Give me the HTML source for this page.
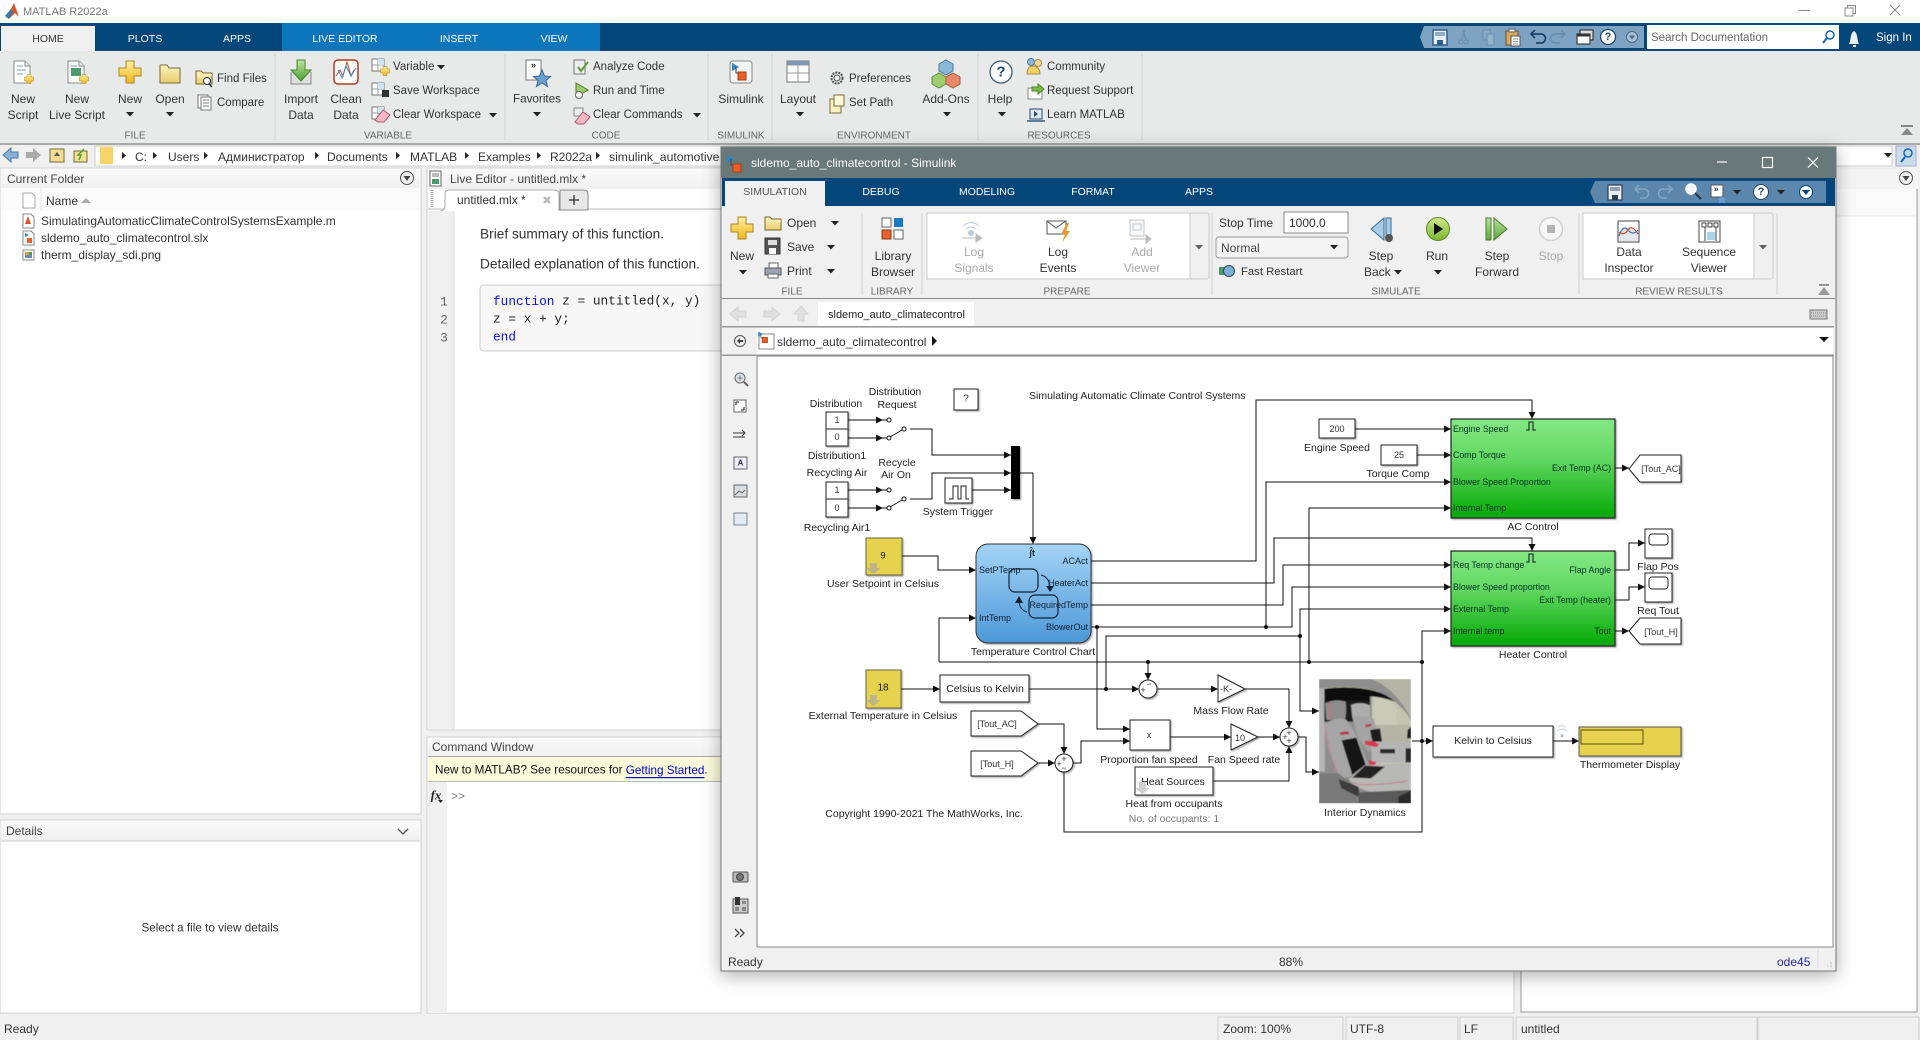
<!DOCTYPE html>
<html><head><meta charset="utf-8"><title>MATLAB R2022a</title>
<style>
html,body{margin:0;padding:0;background:#f0f0f0;overflow:hidden}
svg{display:block}
text{font-family:"Liberation Sans",sans-serif;font-size:12px;fill:#333;dominant-baseline:central}
.c{text-anchor:middle}.e{text-anchor:end}
.g{font-size:10px;fill:#666;text-anchor:middle;transform:translateY(1px)}
.w{fill:#fff}.tab{font-size:10.5px;fill:#fff;text-anchor:middle}
.d{fill:#aaa}
.r{font-size:11.5px}
.m{font-family:"Liberation Mono",monospace;font-size:12.8px;fill:#222}
.k{fill:#1010e8}
.n{font-size:10.5px;fill:#222;transform:translateY(1px)}
.p{font-size:8.8px;fill:#032}
.f{font-size:9px;fill:#123}
.b{font-size:9.5px;fill:#111}
.s9{font-size:9px}
.ln{fill:none;stroke:#111;stroke-width:1}
.la{fill:none;stroke:#111;stroke-width:1;marker-end:url(#ah)}
.blk{fill:#fff;stroke:#222;stroke-width:1;filter:url(#bs)}
.div{stroke:#d2d2d2;stroke-width:1}
.arr{fill:#222}
</style></head><body>
<svg width="1920" height="1040" viewBox="0 0 1920 1040" xmlns="http://www.w3.org/2000/svg">
<defs>
<marker id="ah" markerUnits="userSpaceOnUse" markerWidth="8" markerHeight="8" refX="7" refY="4" orient="auto"><path d="M0 .5L7 4L0 7.5z" fill="#111"/></marker>
<filter id="bs" x="-20%" y="-20%" width="150%" height="150%"><feDropShadow dx="1.2" dy="1.2" stdDeviation=".8" flood-color="#000" flood-opacity=".35"/></filter>
<filter id="win" x="-5%" y="-5%" width="110%" height="110%"><feDropShadow dx="0" dy="4" stdDeviation="9" flood-color="#000" flood-opacity=".32"/></filter>
<filter id="soft"><feGaussianBlur stdDeviation="1.800"/></filter>
<linearGradient id="yl" x1="0" y1="0" x2="0" y2="1"><stop offset="0" stop-color="#fff0a0"/><stop offset="1" stop-color="#f2b51c"/></linearGradient>
<linearGradient id="fd" x1="0" y1="0" x2="0" y2="1"><stop offset="0" stop-color="#fbf3c0"/><stop offset="1" stop-color="#e8cd6a"/></linearGradient>
<linearGradient id="chart" x1="0" y1="0" x2="0" y2="1"><stop offset="0" stop-color="#a4d4f7"/><stop offset="1" stop-color="#4c98d8"/></linearGradient>
<linearGradient id="grn" x1="0" y1="0" x2="0" y2="1"><stop offset="0" stop-color="#84e884"/><stop offset=".4" stop-color="#62d862"/><stop offset="1" stop-color="#04a804"/></linearGradient>
<linearGradient id="hd" x1="0" y1="0" x2="0" y2="1"><stop offset="0" stop-color="#fafafa"/><stop offset="1" stop-color="#f0f0f0"/></linearGradient>
<linearGradient id="run" x1="0" y1="0" x2="0" y2="1"><stop offset="0" stop-color="#cfe88a"/><stop offset="1" stop-color="#7fb62e"/></linearGradient>
<linearGradient id="grb" x1="0" y1="0" x2="0" y2="1"><stop offset="0" stop-color="#bde3a0"/><stop offset="1" stop-color="#5aa83c"/></linearGradient>
<linearGradient id="ar" x1="0" y1="0" x2="0" y2="1"><stop offset="0" stop-color="#bfe3a8"/><stop offset="1" stop-color="#4a9e2c"/></linearGradient>
<clipPath id="car"><rect x="12" y="12" width="276" height="373"/></clipPath>

<g id="doc"><path d="M-8-11H3L8-6V11H-8z" fill="#fff" stroke="#8a8a8a"/><path d="M3-11V-6H8" fill="#e8e8e8" stroke="#8a8a8a"/><path d="M-5-6h6M-5-2h9M-5 2h6" stroke="#7a9ab8" fill="none"/></g>
<path id="plus" d="M-4-9H4V-4H9V4H4V9H-4V4H-9V-4H-4z" fill="url(#yl)" stroke="#a88420"/>
<path id="bigplus" d="M-4-11H4V-4H11V4H4V11H-4V4H-11V-4H-4z" fill="url(#yl)" stroke="#a88420"/>
<g id="fold"><path d="M-8-6H-3L-1-4H8V7H-8z" fill="url(#fd)" stroke="#77652c"/><path d="M-6-2H8" stroke="#fff8d0"/></g>
<g id="tri"><path d="M-4-2H4L0 2.5z" fill="#222"/></g>
<g id="save"><path d="M-7-8H7V8H-7z" fill="#3f6f9f" stroke="#24466a"/><path d="M-5-8H5V-2H-5z" fill="#e8eef4"/><path d="M-3 2H3V8H-3z" fill="#fff"/></g>
<g id="simk"><path d="M-8-8L-1-4L-8 0z" fill="#2c86c8"/><path d="M-4-4V2H-1" fill="none" stroke="#444"/><rect x="-2" y="1" width="8" height="8" fill="#e8602c" stroke="#a83c14"/></g>
<g id="cd"><circle r="6.500" fill="#eee" stroke="#555"/><path d="M-3.500-2H3.500L0 3z" fill="#444"/></g>
<g id="wb"><path d="M-6-6H6V6H-6z" fill="#fff" stroke="#777"/><path d="M-6 0H6M0-6V6" stroke="#999"/><path d="M0-6H6V0H0z" fill="#cfe2f0"/></g>
</defs>

<!-- MAIN WINDOW -->
<rect width="1920" height="1040" fill="#f0f0f0"/>
<rect width="1920" height="23" fill="#fff"/>
<path d="M5 16L11 9 14 3 19 17 15 13 9 19z" fill="#d8542a"/><path d="M5 16L11 9 13 12 9 19z" fill="#3a7ba8"/>
<text x="23" y="12" style="font-size:11px;fill:#777">MATLAB R2022a</text>
<path d="M1799 10.500h11" stroke="#888"/><path d="M1845 8h8v8h-8zM1847.500 8V5.500h8v8h-2.500" fill="none" stroke="#888"/><path d="M1890 5l10 10M1900 5l-10 10" stroke="#888"/>

<rect y="23" width="1920" height="28" fill="#03467a"/>
<rect x="282" y="23" width="318" height="28" fill="#0c76bd"/>
<rect x="1" y="26" width="94" height="25" fill="#f0f0f0"/>
<text x="48" y="39" class="tab" style="fill:#333">HOME</text>
<text x="145" y="39" class="tab">PLOTS</text><text x="237" y="39" class="tab">APPS</text>
<text x="345" y="39" class="tab">LIVE EDITOR</text><text x="459" y="39" class="tab">INSERT</text><text x="554" y="39" class="tab">VIEW</text>

<!-- quick access -->
<path d="M1424 26H1644V48H1424L1420 37z" fill="#7ea2c2"/>
<path d="M1433 30H1447V45H1433z" fill="#e8eef4" stroke="#2f5f8f" stroke-width="1.500"/><path d="M1435 32H1445V36H1435z" fill="#8fb0cc"/><path d="M1437 40H1443V45H1437z" fill="#2f5f8f"/>
<g opacity=".55" fill="none" stroke="#5a7f9f"><circle cx="1461" cy="42" r="2"/><circle cx="1466" cy="42" r="2"/><path d="M1461 40l4-10M1466 40l-3-10"/><path d="M1483 30h7v10h-7z" fill="#8fb0cc"/><path d="M1487 34h7v11h-7z" fill="#a8c0d4"/></g>
<path d="M1506 31h12v14h-12z" fill="#dca860" stroke="#6a5030"/><path d="M1509 29h6v3h-6z" fill="#eee" stroke="#666"/><path d="M1511 36h9v10h-9z" fill="#fff" stroke="#555"/><path d="M1513 39h5M1513 41.500h5M1513 44h5" stroke="#777" stroke-width=".7"/>
<path d="M1532 34h9a4.500 4.500 0 0 1 0 9h-5" fill="none" stroke="#12365a" stroke-width="1.500"/><path d="M1535 30l-4 4 4 4" fill="none" stroke="#12365a" stroke-width="1.500"/>
<path d="M1564 34h-9a4.500 4.500 0 0 0 0 9h5" fill="none" stroke="#5a7f9f" stroke-width="1.500" opacity=".6"/><path d="M1561 30l4 4-4 4" fill="none" stroke="#5a7f9f" stroke-width="1.500" opacity=".6"/>
<path d="M1580 30h13v10h-13z" fill="#ddd" stroke="#222"/><path d="M1577 34h13v10h-13z" fill="#fff" stroke="#222"/><path d="M1577 34h13v2.500h-13z" fill="#333"/>
<circle cx="1608" cy="37" r="7.500" fill="#fff" stroke="#24466a" stroke-width="1.300"/><text x="1608" y="37" class="c" style="font-weight:bold;font-size:11px;fill:#24466a">?</text>
<circle cx="1632" cy="37" r="5.500" fill="#a9bfd2" stroke="#47698a"/><path d="M1629 35.500h6l-3 4z" fill="#47698a"/>
<rect x="1647" y="25" width="192" height="24" fill="#fff"/>
<text x="1651" y="38" style="fill:#666;font-size:11.500px">Search Documentation</text>
<circle cx="1830" cy="35" r="4" fill="none" stroke="#1464b4" stroke-width="1.500"/><path d="M1827 38l-4 5" stroke="#1464b4" stroke-width="2"/>
<path d="M1849 44c2-3 1-11 5-13 4 2 3 10 5 13zM1853 45h3v2h-3z" fill="#eef2f6"/>
<text x="1876" y="38" class="w" style="font-size:11.500px">Sign In</text>

<!-- toolstrip -->
<rect y="51" width="1920" height="92" fill="#e8e9e9"/>
<rect y="143" width="1920" height="2" fill="#a8a8a8"/>
<g class="div"><path d="M275 54V140M505 54V140M708 54V140M772 54V140M978 54V140M1142 54V140"/></g>

<use href="#doc" x="22" y="72"/><use href="#plus" x="29" y="79" transform="translate(14.500 39.500) scale(.5)"/>
<text x="23" y="99" class="c">New</text><text x="23" y="115" class="c">Script</text>
<use href="#doc" x="76" y="72"/><rect x="71" y="68" width="10" height="8" fill="#4a9a6c"/><use href="#plus" x="84" y="79" transform="translate(42 39.500) scale(.5)"/>
<text x="77" y="99" class="c">New</text><text x="77" y="115" class="c">Live Script</text>
<use href="#bigplus" x="130" y="72"/><text x="130" y="99" class="c">New</text><use href="#tri" x="130" y="114"/>
<path d="M160 65H167L169 68H180V83H160z" fill="url(#fd)" stroke="#776a3a"/><text x="170" y="99" class="c">Open</text><use href="#tri" x="170" y="114"/>
<use href="#fold" x="204" y="77"/><circle cx="207" cy="81" r="3.500" fill="#fff" stroke="#235"/><path d="M209 84l3 3" stroke="#235" stroke-width="1.500"/>
<text x="217" y="79" class="r">Find Files</text>
<path d="M198 95h10v13h-10zM201 98h10" fill="#fff" stroke="#777"/><path d="M201 97h10v13h-10z" fill="#fff" stroke="#777"/><path d="M203 100h6M203 103h6M203 106h6" stroke="#777"/>
<text x="217" y="103" class="r">Compare</text>
<text x="135" y="135" class="g">FILE</text>

<path d="M291 72V84h20V72" fill="#ddd" stroke="#888"/><path d="M297 60H305V70H311L301 81 291 70H297z" fill="url(#ar)" stroke="#48882c"/>
<text x="301" y="99" class="c">Import</text><text x="301" y="115" class="c">Data</text>
<rect x="334" y="60" width="24" height="24" rx="4" fill="#fff" stroke="#b03828" stroke-width="1.500"/><path d="M336 76l4-6 3 6 4-14 4 14 3-6" fill="none" stroke="#c84c2c"/><path d="M338 70l4 8 4-12 5 10 5-8" fill="none" stroke="#3a84c4"/>
<text x="346" y="99" class="c">Clean</text><text x="346" y="115" class="c">Data</text>
<use href="#wb" x="378" y="65"/><use href="#plus" x="385" y="71" transform="translate(192.500 35.500) scale(.5)"/>
<text x="393" y="67" class="r">Variable</text><use href="#tri" x="441" y="67"/>
<use href="#wb" x="378" y="89"/><rect x="382" y="90" width="7" height="7" fill="#333"/><text x="393" y="91" class="r">Save Workspace</text>
<use href="#wb" x="378" y="113"/><path d="M375 120l8-10 7 5-6 7h-6z" fill="#f4b8c4" stroke="#b05a6a"/><text x="393" y="115" class="r">Clear Workspace</text><use href="#tri" x="493" y="115"/>
<text x="388" y="135" class="g">VARIABLE</text>

<path d="M526 60h15v20h-15z" fill="#fff" stroke="#777"/><text x="531" y="65" style="font-size:9px;font-weight:bold;fill:#222">»</text><path d="M542 70l2.500 6 6 .5-4.500 4 1.500 6-5.500-3.500-5.500 3.500 1.500-6-4.500-4 6-.5z" fill="#6aa0d0" stroke="#3a6a9a"/>
<text x="537" y="99" class="c" style="font-size:11.700px">Favorites</text><use href="#tri" x="537" y="114"/>
<path d="M574 60h11v14h-11z" fill="#eee" stroke="#777"/><path d="M578 67l3 4 7-9" fill="none" stroke="#5a9a3a" stroke-width="2"/><text x="593" y="67" class="r">Analyze Code</text>
<path d="M576 83l12 7-12 7z" fill="#9acc6a" stroke="#4a7a2c"/><circle cx="579" cy="95" r="3.500" fill="#fff" stroke="#666"/><text x="593" y="91" class="r">Run and Time</text>
<path d="M574 108h9v8h-9z" fill="#eee" stroke="#888"/><path d="M575 122l8-10 7 5-6 7h-6z" fill="#f4b8c4" stroke="#b05a6a"/><text x="593" y="115" class="r">Clear Commands</text><use href="#tri" x="697" y="115"/>
<text x="606" y="135" class="g">CODE</text>

<rect x="730" y="61" width="22" height="22" rx="3" fill="#f5f5f5" stroke="#888"/><use href="#simk" x="740" y="71"/>
<text x="741" y="99" class="c">Simulink</text><text x="741" y="135" class="g">SIMULINK</text>
<rect x="787" y="61" width="22" height="21" fill="#fff" stroke="#777"/><path d="M787 65h22M798 65v17M787 73h22" stroke="#999"/><path d="M787 61h22v4h-22z" fill="#7a98b0"/>
<text x="798" y="99" class="c">Layout</text><use href="#tri" x="800" y="114"/>
<circle cx="837" cy="78" r="5.500" fill="none" stroke="#555" stroke-width="2" stroke-dasharray="2 1"/><circle cx="837" cy="78" r="3" fill="#eee" stroke="#555"/><text x="849" y="79" class="r">Preferences</text>
<path d="M830 99h11v14h-11z" fill="#fbf3c0" stroke="#776a3a"/><path d="M834 95h10v11h-10z" fill="#fdf8d8" stroke="#776a3a"/><text x="849" y="103" class="r">Set Path</text>
<path d="M946 60l7 4v7l-7 4-7-4v-7z" fill="#8ab8d8" stroke="#4a7a9a"/><path d="M939 73l7 4v7l-7 4-7-4v-7z" fill="#a0cc70" stroke="#5a8a3a"/><path d="M953 73l7 4v7l-7 4-7-4v-7z" fill="#e88a6a" stroke="#a85a3a"/>
<text x="946" y="99" class="c">Add-Ons</text><use href="#tri" x="947" y="114"/>
<text x="874" y="135" class="g">ENVIRONMENT</text>
<circle cx="1001" cy="72" r="11" fill="#fff" stroke="#3a5a7a" stroke-width="1.300"/><text x="1001" y="72" class="c" style="font-weight:bold;font-size:15px;fill:#24466a">?</text>
<text x="1000" y="99" class="c">Help</text><use href="#tri" x="1002" y="114"/>
<circle cx="1031" cy="62" r="3.500" fill="#8ab8d8" stroke="#4a7a9a"/><circle cx="1038" cy="63" r="3.500" fill="#f4d89a" stroke="#a88a4a"/><path d="M1027 74c0-6 3-8 6-8s7 2 7 8z" fill="#f4d060" stroke="#a88a4a"/><text x="1047" y="67" class="r">Community</text>
<path d="M1028 88h14v11h-14z" fill="#fff" stroke="#888"/><path d="M1032 87h6v-3l6 5-6 5v-3h-6z" fill="#7aba4a" stroke="#4a8a2a"/><text x="1047" y="91" class="r">Request Support</text>
<path d="M1030 109h12v10h-12z" fill="#dfe8f0" stroke="#24466a"/><path d="M1034 111l4 3-4 3z" fill="#24466a"/><path d="M1027 120h18v2h-18z" fill="#5a80a0"/><text x="1047" y="115" class="r">Learn MATLAB</text>
<text x="1059" y="135" class="g">RESOURCES</text>
<path d="M1901 126h12" stroke="#666" stroke-width="1.500"/><path d="M1907 128l6 7h-12z" fill="#888"/>

<!-- address bar -->
<path d="M3 155l8-7v4h7v6h-7v4z" fill="#8ab0d4" stroke="#4a7aa4"/><path d="M41 155l-8-7v4h-7v6h7v4z" fill="#aaa"/>
<path d="M50 149h14v13h-14z" fill="#f4dc90" stroke="#776a3a"/><path d="M57 152l-3 4h6z" fill="#555"/>
<path d="M74 151h13v11h-13z" fill="#f0e090" stroke="#776a3a"/><path d="M84 149l-6 6h3l-2 5" fill="none" stroke="#5a9a3a" stroke-width="1.500"/>
<rect x="95" y="146" width="1797" height="20" fill="#fff" stroke="#cfcfcf"/>
<rect x="100" y="147" width="13" height="17" fill="#f6d46a"/>
<rect x="1896" y="146" width="20" height="20" fill="#c9dcec" stroke="#aac"/>
<circle cx="1908" cy="153" r="4" fill="none" stroke="#1464b4" stroke-width="1.500"/><path d="M1905 157l-4 5" stroke="#1464b4" stroke-width="2"/>
<use href="#tri" x="1888" y="155"/>
<g class="arr"><path d="M122 152l4 3.500-4 3.500zM153 152l4 3.500-4 3.500zM204 152l4 3.500-4 3.500zM315 152l4 3.500-4 3.500zM396 152l4 3.500-4 3.500zM465 152l4 3.500-4 3.500zM537 152l4 3.500-4 3.500zM596 152l4 3.500-4 3.500z"/></g>
<text x="135" y="157">C:</text><text x="168" y="157">Users</text><text x="218" y="157">Администратор</text><text x="327" y="157">Documents</text><text x="410" y="157">MATLAB</text><text x="478" y="157">Examples</text><text x="550" y="157">R2022a</text><text x="609" y="157" style="font-size:12.200px">simulink_automotive</text>

<!-- current folder -->
<rect x="0" y="168" width="421" height="646" fill="#fff" stroke="#cfcfcf"/>
<rect x="1" y="169" width="419" height="19" fill="url(#hd)"/>
<text x="7" y="179" style="fill:#444">Current Folder</text><use href="#cd" x="407" y="178" />
<rect x="1" y="188" width="419" height="23" fill="#fafafa"/><path d="M41 188V211" stroke="#e8e8e8"/>
<path d="M23 193h9l3 3v12h-12z" fill="#fff" stroke="#aaa"/>
<text x="46" y="201">Name</text><path d="M81 203l5-5 5 5z" fill="#aaa"/>
<path d="M23 214h8l3 3v11h-11z" fill="#fff" stroke="#888"/><path d="M25 224l3-8 3 8z" fill="#d8542a"/><text x="41" y="221">SimulatingAutomaticClimateControlSystemsExample.m</text>
<path d="M23 231h8l3 3v11h-11z" fill="#fff" stroke="#888"/><path d="M25 233l4 2-4 2z" fill="#2c86c8"/><rect x="27" y="238" width="5" height="5" fill="#e8602c"/><text x="41" y="238">sldemo_auto_climatecontrol.slx</text>
<rect x="23" y="250" width="11" height="10" fill="#fff" stroke="#888"/><rect x="25" y="252" width="4" height="3" fill="#d8a030"/><rect x="29" y="252" width="3" height="3" fill="#4a9a6c"/><rect x="25" y="255" width="7" height="3" fill="#6a8ac0"/><text x="41" y="255">therm_display_sdi.png</text>

<!-- details -->
<rect x="0" y="820" width="421" height="193" fill="#fff" stroke="#cfcfcf"/>
<rect x="1" y="821" width="419" height="20" fill="url(#hd)"/><path d="M1 841H420" stroke="#cfcfcf"/>
<text x="6" y="831" style="fill:#444">Details</text><path d="M398 829l5 5 5-5" fill="none" stroke="#555" stroke-width="1.300"/>
<text x="210" y="928" class="c" style="font-size:11.700px">Select a file to view details</text>

<!-- editor -->
<rect x="427" y="168" width="480" height="562" fill="#fff" stroke="#cfcfcf"/>
<rect x="428" y="169" width="478" height="20" fill="url(#hd)"/>
<path d="M430 171h11v15h-11z" fill="#fff" stroke="#666"/><path d="M432 179h7v5h-7z" fill="#4a9a6c"/><path d="M432 174h7M432 176h7" stroke="#777"/>
<text x="450" y="179" style="fill:#444">Live Editor - untitled.mlx *</text>
<path d="M428 209H906" stroke="#bbb"/>
<path d="M432 190v18" stroke="#aaa" stroke-dasharray="1 1" stroke-width="3"/>
<path d="M440 211q5 0 5-6V194q0-4 4-4H555q4 0 4 4V211" fill="#fff" stroke="#aaa"/>
<text x="457" y="200">untitled.mlx *</text><path d="M544 197l6 6M550 197l-6 6" stroke="#b4b4b4" stroke-width="2"/>
<path d="M560 190h24q4 0 4 4V210H560z" fill="#e8e8e8" stroke="#888"/><path d="M569 200h10M574 195v10" stroke="#444" stroke-width="1.500"/>
<rect x="428" y="211" width="26" height="518" fill="#f0f0f0"/><path d="M454 211V729" stroke="#dcdcdc"/>
<text x="480" y="234" style="font-size:13.700px">Brief summary of this function.</text>
<text x="480" y="264" style="font-size:13.700px">Detailed explanation of this function.</text>
<rect x="480" y="285" width="300" height="66" rx="4" fill="#f7f7f7" stroke="#ccc"/>
<text x="444" y="302" class="c m" style="fill:#666">1</text><text x="444" y="320" class="c m" style="fill:#666">2</text><text x="444" y="338" class="c m" style="fill:#666">3</text>
<text x="493" y="301" class="m"><tspan class="k">function</tspan> z = untitled(x, y)</text>
<text x="493" y="319" class="m">z = x + y;</text>
<text x="493" y="337" class="m k">end</text>

<!-- command window -->
<rect x="427" y="737" width="1087" height="276" fill="#fff" stroke="#cfcfcf"/>
<rect x="428" y="738" width="1085" height="19" fill="url(#hd)"/>
<path d="M428 756.500H1513" stroke="#a8a8a8"/>
<text x="432" y="747" style="fill:#444">Command Window</text>
<rect x="428" y="757" width="1085" height="24" fill="#fbfbdc"/><path d="M428 781.500H1513" stroke="#bbb"/>
<text x="435" y="770" style="fill:#111;font-size:11.700px">New to MATLAB? See resources for <tspan fill="#0000d8" text-decoration="underline">Getting Started</tspan>.</text>
<rect x="428" y="782" width="19" height="231" fill="#f0f0f0"/>
<text x="436" y="795" class="c" style="font-family:'Liberation Serif',serif;font-style:italic;font-weight:bold;font-size:13px;fill:#222">fx</text><path d="M438 800h5l-2.500 3z" fill="#222"/>
<text x="451" y="796" style="fill:#777;font-size:12px">&gt;&gt;</text>

<!-- right panel -->
<rect x="1521" y="189" width="396" height="823" fill="#fff" stroke="#9a9a9a"/>
<rect x="1800" y="169" width="118" height="20" fill="#f4f4f4"/><use href="#cd" x="1906" y="178"/>
<rect x="1800" y="189" width="116" height="27" fill="#fafafa"/>
<path d="M1800 216H1916" stroke="#ececec"/>

<!-- status bar -->
<rect y="1014" width="1920" height="26" fill="#f0f0f0"/>
<text x="4" y="1029">Ready</text>
<g fill="none" stroke="#cfcfcf"><rect x="1218" y="1017" width="125" height="24"/><rect x="1346" y="1017" width="112" height="24"/><rect x="1460" y="1017" width="53" height="24"/><rect x="1516" y="1017" width="241" height="24"/><rect x="1758" y="1017" width="161" height="24"/></g>
<text x="1223" y="1029">Zoom: 100%</text><text x="1350" y="1029">UTF-8</text><text x="1464" y="1029">LF</text><text x="1521" y="1029">untitled</text>

<!-- SIMULINK WINDOW -->
<rect x="721" y="147" width="1115" height="824" fill="#f0f0f0" stroke="#777" filter="url(#win)"/>
<rect x="721" y="147" width="1115" height="31" fill="#697878"/>
<use href="#simk" x="735" y="163"/>
<text x="751" y="163" style="fill:#fff">sldemo_auto_climatecontrol - Simulink</text>
<path d="M1717 162h10" stroke="#fff" stroke-width="1.200"/><rect x="1762.500" y="157.500" width="10" height="10" fill="none" stroke="#fff" stroke-width="1.200"/><path d="M1808 157.500l10 10M1818 157.500l-10 10" stroke="#fff" stroke-width="1.200"/>
<rect x="722" y="178" width="1113" height="28" fill="#03467a"/>
<rect x="725" y="181" width="100" height="25" fill="#f0f0f0"/>
<text x="775" y="192" class="tab" style="fill:#555">SIMULATION</text>
<text x="881" y="192" class="tab">DEBUG</text><text x="987" y="192" class="tab">MODELING</text><text x="1093" y="192" class="tab">FORMAT</text><text x="1199" y="192" class="tab">APPS</text>
<path d="M1595 181H1826V203H1595L1590 192z" fill="#5b87ad"/>
<path d="M1608 185H1622V200H1608z" fill="#e8eef4" stroke="#2f3f4f" stroke-width="1.200"/><path d="M1610 187H1620V191H1610z" fill="#8f9fac"/><path d="M1612 195H1618V200H1612z" fill="#2f3f4f"/>
<path d="M1636 189h8a4.500 4.500 0 0 1 0 9h-4" fill="none" stroke="#86a8c4" stroke-width="1.500"/><path d="M1639 185l-4 4 4 4" fill="none" stroke="#86a8c4" stroke-width="1.500"/>
<path d="M1671 189h-8a4.500 4.500 0 0 0 0 9h4" fill="none" stroke="#86a8c4" stroke-width="1.500"/><path d="M1668 185l4 4-4 4" fill="none" stroke="#86a8c4" stroke-width="1.500"/>
<circle cx="1691" cy="189" r="5" fill="#eef4fa" stroke="#fff" stroke-width="1.500"/><path d="M1695 193l6 6" stroke="#22384e" stroke-width="2"/>
<path d="M1711 185h12v12h-12z" fill="#fff" stroke="#555"/><text x="1714" y="189" style="font-size:8px;font-weight:bold;fill:#222">»</text><path d="M1722 195l1.500 3 3 .5-2 2 .5 3-3-1.500-3 1.500.5-3-2-2 3-.5z" fill="#6aa0d0"/>
<use href="#tri" x="1737" y="192"/>
<circle cx="1761" cy="192" r="7.500" fill="#fff" stroke="#24466a"/><text x="1761" y="192" class="c" style="font-weight:bold;font-size:11px;fill:#24466a">?</text><use href="#tri" x="1781" y="192"/>
<circle cx="1806" cy="192" r="6.500" fill="#fff" stroke="#03467a"/><path d="M1802 190h8l-4 5z" fill="#03467a"/>

<!-- simulink strip -->
<g class="div"><path d="M862 213V295M922 213V295M1212 213V295M1579 213V295M1777 213V295"/></g>
<rect x="722" y="298" width="1113" height="1" fill="#888"/>
<use href="#bigplus" x="742" y="228"/><text x="742" y="256" class="c">New</text><use href="#tri" x="743" y="272"/>
<use href="#fold" x="773" y="223"/><text x="787" y="223">Open</text><use href="#tri" x="835" y="223"/>
<path d="M765 238h15v16h-15z" fill="#555" stroke="#333"/><path d="M768 240h9v5h-9z" fill="#ddd"/><path d="M769 248h7v6h-7z" fill="#fff"/><text x="787" y="247">Save</text><use href="#tri" x="831" y="247"/>
<path d="M769 263h9v5h-9z" fill="#fff" stroke="#666"/><path d="M765 268h16v7h-16z" fill="#9aa4b0" stroke="#555"/><path d="M768 274h10v4h-10z" fill="#fff" stroke="#666"/><text x="787" y="271">Print</text><use href="#tri" x="831" y="271"/>
<text x="792" y="291" class="g">FILE</text>
<rect x="882" y="218" width="9" height="9" fill="#fff" stroke="#666"/><rect x="894" y="218" width="9" height="9" fill="#1a7ac4"/><rect x="882" y="230" width="9" height="9" fill="#e8602c" stroke="#8a3a14"/><rect x="894" y="230" width="9" height="9" fill="#fff" stroke="#666"/>
<text x="893" y="256" class="c">Library</text><text x="893" y="272" class="c">Browser</text><text x="892" y="291" class="g">LIBRARY</text>
<rect x="927" y="213" width="282" height="66" rx="2" fill="#f0f0f0" stroke="#ccc"/><rect x="927" y="213" width="263" height="66" fill="#fff" stroke="#ccc"/>
<g fill="none" stroke="#b8c8d8"><path d="M963 226q8-7 16 0M966 229q5-4 10 0"/><circle cx="971" cy="233" r="3" fill="#b8cce0" stroke="none"/></g><path d="M962 238H981M976 234l6 4-6 4z" fill="#bbb" stroke="#bbb"/>
<text x="974" y="252" class="c d">Log</text><text x="974" y="268" class="c d">Signals</text>
<path d="M1047 221h19v13h-19z" fill="#fff" stroke="#555"/><path d="M1047 221l9 7 10-7" fill="none" stroke="#555"/><path d="M1067 223l-6 11h4l-3 9 8-12h-4l3-8z" fill="#e89a2c"/>
<text x="1058" y="252" class="c">Log</text><text x="1058" y="268" class="c">Events</text>
<path d="M1130 220h14v16h-14z" fill="#f4f8fb" stroke="#c4c4c4"/><path d="M1133 224h8v6h-8z" fill="none" stroke="#c4c4c4"/><path d="M1130 239H1150M1146 235l5 4-5 4z" fill="#bbb" stroke="#bbb"/>
<text x="1142" y="252" class="c d">Add</text><text x="1142" y="268" class="c d">Viewer</text>
<use href="#tri" x="1199" y="247" opacity=".7"/><text x="1067" y="291" class="g">PREPARE</text>
<text x="1219" y="223">Stop Time</text>
<rect x="1284" y="212" width="64" height="21" fill="#fff" stroke="#888"/><text x="1289" y="223">1000.0</text>
<rect x="1216" y="237" width="132" height="21" rx="3" fill="#f4f4f4" stroke="#999"/><text x="1221" y="248" style="fill:#444">Normal</text><use href="#tri" x="1334" y="247"/>
<path d="M1219 267h6v8h-6z" fill="#4a9a6c"/><circle cx="1229" cy="271" r="5.500" fill="#7ab0d8" stroke="#345"/><text x="1241" y="272" style="font-size:11.300px">Fast Restart</text>
<path d="M1371 229l13-11v22z" fill="#a8cce8" stroke="#3a6a94"/><path d="M1386 218h5v22h-5z" fill="#a8cce8" stroke="#3a6a94"/><circle cx="1389" cy="238" r="4" fill="#555"/>
<text x="1381" y="256" class="c">Step</text><text x="1364" y="272">Back</text><use href="#tri" x="1398" y="272"/>
<circle cx="1438" cy="229" r="11.500" fill="url(#run)" stroke="#5a8a2a"/><path d="M1434 223l9 6-9 6z" fill="#111"/>
<text x="1437" y="256" class="c">Run</text><use href="#tri" x="1438" y="272"/>
<path d="M1486 218h5v22h-5z" fill="url(#grb)" stroke="#4a7a2c"/><path d="M1494 218l13 11-13 11z" fill="url(#grb)" stroke="#4a7a2c"/>
<text x="1497" y="256" class="c">Step</text><text x="1497" y="272" class="c">Forward</text>
<circle cx="1551" cy="229" r="11.500" fill="#f6f6f6" stroke="#d0d0d0" stroke-width="1.500"/><rect x="1547" y="225" width="8" height="8" fill="#b4b4b4"/>
<text x="1551" y="256" class="c d">Stop</text><text x="1396" y="291" class="g">SIMULATE</text>
<rect x="1583" y="213" width="190" height="66" rx="2" fill="#f0f0f0" stroke="#ccc"/><rect x="1583" y="213" width="171" height="66" fill="#fff" stroke="#ccc"/>
<rect x="1618" y="221" width="21" height="21" fill="#fff" stroke="#444"/><path d="M1619 241v-7q8-14 19 0v7z" fill="#e4e8ec"/><path d="M1619 236q4-12 9-6t10 0" fill="none" stroke="#3a78c0" stroke-width="1.200"/><path d="M1619 232q5 4 9-2t10 4" fill="none" stroke="#d84a2c" stroke-width="1.200"/>
<text x="1629" y="252" class="c">Data</text><text x="1629" y="268" class="c">Inspector</text>
<rect x="1699" y="221" width="21" height="21" fill="#fff" stroke="#444"/><path d="M1702 223h4v4h-4zM1708 223h4v4h-4zM1714 223h4v4h-4zM1705 227v14M1716 227v14" fill="#fff" stroke="#444"/><path d="M1707 232h8v8h-8z" fill="#a8d4ee"/>
<text x="1709" y="252" class="c">Sequence</text><text x="1709" y="268" class="c">Viewer</text>
<use href="#tri" x="1763" y="247" opacity=".7"/><text x="1679" y="291" class="g">REVIEW RESULTS</text>
<path d="M1819 285h10" stroke="#777" stroke-width="1.500"/><path d="M1824 287l6 8h-12z" fill="#999"/>

<!-- browser bar -->
<path d="M730 314l8-7v4h8v6h-8v4z" fill="#e0e0e0" stroke="#d4d4d4"/><path d="M780 314l-8-7v4h-8v6h8v4z" fill="#e0e0e0" stroke="#d4d4d4"/><path d="M801 306l7 8h-4v7h-6v-7h-4z" fill="#e0e0e0" stroke="#d4d4d4"/>
<rect x="818" y="302" width="156" height="25" fill="#fff"/><text x="828" y="315" style="font-size:11px;fill:#222">sldemo_auto_climatecontrol</text>
<rect x="1810" y="310" width="17" height="9" fill="#ccc" stroke="#777"/><path d="M1811 313h15M1811 316h15" stroke="#888" stroke-dasharray="1 1"/>
<rect x="722" y="326" width="1112" height="1.500" fill="#999"/>
<circle cx="740" cy="341" r="5.500" fill="#eee" stroke="#555"/><path d="M737 341l3-3v2h3v2h-3v2z" fill="#444"/>
<rect x="757" y="328" width="1076" height="27" fill="#fff"/>
<rect x="759" y="334" width="15" height="15" fill="#fff" stroke="#888"/><use href="#simk" x="766" y="339" transform="translate(258 113) scale(.66)"/>
<text x="777" y="342">sldemo_auto_climatecontrol</text><path d="M932 336l5 5-5 5z" fill="#111"/>
<path d="M1819 337h10l-5 5z" fill="#111"/>
<rect x="722" y="354.500" width="1112" height="1.500" fill="#999"/>
<rect x="757" y="356" width="1076" height="591" fill="#fff" stroke="#888"/>

<!-- left palette -->
<g fill="none" stroke="#666">
<circle cx="740" cy="378" r="5" fill="#dfe8f0"/><path d="M744 382l4 4" stroke-width="2"/><path d="M737 378h6M740 375v6" stroke-width=".8"/>
<rect x="734" y="400" width="12" height="12" fill="#fff"/><path d="M736 402h3M736 402v3M744 410h-3M744 410v-3" stroke="#222"/>
<path d="M733 433h12m-3-3l3 3-3 3M733 437h12m-3-3" stroke="#333"/>
<rect x="734" y="457" width="13" height="12" fill="#eef"/>
<rect x="734" y="485" width="13" height="12" fill="#d8dde2"/><path d="M735 495l4-4 3 2 3-3"/>
<rect x="734" y="513" width="13" height="12" fill="#e4eaf2" stroke="#789"/>
</g>
<text x="740.500" y="463" class="c" style="font-size:8px;font-weight:bold">A</text>
<rect x="733" y="872" width="15" height="10" rx="1" fill="#bbb" stroke="#555"/><circle cx="740" cy="877" r="3.500" fill="#777" stroke="#444"/>
<rect x="733" y="899" width="15" height="14" fill="#ccc" stroke="#555"/><rect x="735" y="897" width="5" height="8" fill="#333"/><rect x="742" y="901" width="4" height="3" fill="#888"/><rect x="735" y="907" width="4" height="4" fill="#888"/><rect x="742" y="907" width="4" height="4" fill="#888"/>
<path d="M735 929l4 4-4 4M740 929l4 4-4 4" fill="none" stroke="#444" stroke-width="1.300"/>
<text x="728" y="962" style="fill:#333">Ready</text><text x="1291" y="962" class="c">88%</text><text x="1777" y="962" style="fill:#2a2a9a">ode45</text>
<path d="M1818 950V969" stroke="#ddd"/><path d="M1830 966h2M1827 966h1M1830 963h2M1833 960" stroke="#bbb"/>

<!-- DIAGRAM -->
<g class="ln">
<path d="M883 420h4M883 438h4M883 490h4M883 508h4"/>
<path d="M890 437l12-7M890 507l12-7"/>
<path d="M939 662H1422V832H1064V772"/>
<path d="M1422 662V741"/>
</g>
<g fill="#fff" stroke="#111"><circle cx="889" cy="420" r="2"/><circle cx="889" cy="438" r="2"/><circle cx="904" cy="429" r="2"/><circle cx="889" cy="490" r="2"/><circle cx="889" cy="508" r="2"/><circle cx="904" cy="499" r="2"/></g>
<g class="la">
<path d="M848 420H883"/><path d="M848 438H883"/><path d="M848 490H883"/><path d="M848 508H883"/>
<path d="M910 429H932V455H1011"/><path d="M910 499H932V473H1011"/><path d="M972 490H1011"/>
<path d="M1020 473H1033V544"/>
<path d="M902 556H938V570H976"/><path d="M939 662V618H976"/>
<path d="M1091 561H1256V400H1532V419"/><path d="M1091 583H1274V538H1532V551"/>
<path d="M1091 605H1283V565H1451"/><path d="M1091 627H1292V587H1451"/>
<path d="M1266 627V482H1451"/><path d="M1106 689V636H1300V609H1451"/>
<path d="M1300 636V711H1319"/><path d="M1309 662V508H1451"/><path d="M1422 662V631H1451"/>
<path d="M1355 429H1451"/><path d="M1417 455H1451"/>
<path d="M1615 468H1629"/><path d="M1615 570H1629V543H1645"/><path d="M1615 600H1629V587H1645"/><path d="M1615 631H1629"/>
<path d="M1097 627V729H1130"/><path d="M1029 689H1139"/><path d="M1148 662V680"/>
<path d="M1158 689H1218"/><path d="M1245 689H1289V728"/><path d="M901 689H940"/>
<path d="M1038 724H1064V754"/><path d="M1038 763H1055"/><path d="M1073 763H1081V741H1130"/>
<path d="M1170 737H1231"/><path d="M1258 737H1280"/><path d="M1213 781H1289V746"/>
<path d="M1298 737H1306V772H1319"/><path d="M1412 741H1433"/><path d="M1553 741H1579"/>
</g>
<g fill="#111"><circle cx="1097" cy="627" r="2"/><circle cx="1266" cy="627" r="2"/><circle cx="1300" cy="636" r="2"/><circle cx="1148" cy="662" r="2"/><circle cx="1309" cy="662" r="2"/><circle cx="1422" cy="662" r="2"/><circle cx="1106" cy="689" r="2"/><circle cx="1422" cy="741" r="2"/></g>

<rect x="826" y="412" width="22" height="17" class="blk"/><rect x="826" y="429" width="22" height="17" class="blk"/><rect x="826" y="482" width="22" height="17" class="blk"/><rect x="826" y="499" width="22" height="18" class="blk"/>
<text x="837" y="420" class="c s9">1</text><text x="837" y="437" class="c s9">0</text><text x="837" y="490" class="c s9">1</text><text x="837" y="508" class="c s9">0</text>
<g class="c">
<text x="836" y="403" class="c n">Distribution</text><text x="895" y="391" class="c n">Distribution</text><text x="897" y="404" class="c n">Request</text><text x="837" y="455" class="c n">Distribution1</text><text x="837" y="472" class="c n">Recycling Air</text><text x="897" y="462" class="c n">Recycle</text><text x="896" y="474" class="c n">Air On</text><text x="837" y="527" class="c n">Recycling Air1</text><text x="958" y="511" class="c n">System Trigger</text>
</g>
<rect x="954" y="389" width="24" height="21" class="blk"/><text x="966" y="399" class="c" style="font-size:10px">?</text>
<text x="1029" y="395" class="n">Simulating Automatic Climate Control Systems</text>
<rect x="945" y="478" width="27" height="25" class="blk"/><path d="M949 499h4V486h5v13h3V486h5v13h3" fill="none" stroke="#222"/>
<rect x="1011" y="446" width="9" height="53" fill="#000" filter="url(#bs)"/>

<rect x="866" y="538" width="36" height="37" fill="#e5d24d" stroke="#6a6440" filter="url(#bs)"/>
<text x="883" y="556" class="c b">9</text><path d="M870 563h7v5h4l-7.500 6-7.500-6h4z" fill="#bdb585"/>
<text x="883" y="583" class="c n">User Setpoint in Celsius</text>
<rect x="976" y="544" width="115" height="99" rx="12" fill="url(#chart)" stroke="#333" filter="url(#bs)"/>
<text x="979" y="570" class="f">SetPTemp</text><text x="979" y="618" class="f">IntTemp</text>
<text x="1088" y="561" class="f e">ACAct</text><text x="1088" y="583" class="f e">HeaterAct</text><text x="1088" y="605" class="f e">RequiredTemp</text><text x="1088" y="627" class="f e">BlowerOut</text>
<text x="1032" y="553" class="c" style="font-size:9px;fill:#123;font-weight:bold">ʃ̂t</text>
<rect x="1009" y="569" width="29" height="23" rx="6" fill="none" stroke="#123" stroke-width="1.200"/><rect x="1029" y="595" width="29" height="23" rx="6" fill="none" stroke="#123" stroke-width="1.200"/>
<path d="M1041 575q8 2 9 12" fill="none" stroke="#123"/><path d="M1046 586h8l-4 6z" fill="#123"/><path d="M1027 612q-7-2-8-10" fill="none" stroke="#123"/><path d="M1015 603h8l-4-7z" fill="#123"/>
<text x="1033" y="651" class="c n">Temperature Control Chart</text>

<rect x="1319" y="419" width="36" height="19" class="blk"/><text x="1337" y="429" class="c s9">200</text>
<text x="1337" y="447" class="c n">Engine Speed</text>
<rect x="1381" y="445" width="36" height="20" class="blk"/><text x="1399" y="455" class="c s9">25</text>
<text x="1398" y="473" class="c n">Torque Comp</text>
<rect x="1451" y="419" width="164" height="99" fill="url(#grn)" stroke="#222" stroke-width="1.200" filter="url(#bs)"/>
<path d="M1526 430h3v-8h4v8h3" fill="none" stroke="#122" stroke-width="1.100"/>
<text x="1453" y="429" class="p">Engine Speed</text><text x="1453" y="455" class="p">Comp Torque</text><text x="1453" y="482" class="p">Blower Speed Proportion</text><text x="1453" y="508" class="p">Internal Temp</text><text x="1611" y="468" class="p e">Exit Temp (AC)</text>
<text x="1533" y="526" class="c n">AC Control</text>
<rect x="1451" y="551" width="164" height="95" fill="url(#grn)" stroke="#222" stroke-width="1.200" filter="url(#bs)"/>
<path d="M1526 562h3v-8h4v8h3" fill="none" stroke="#122" stroke-width="1.100"/>
<text x="1453" y="565" class="p">Req Temp change</text><text x="1453" y="587" class="p">Blower Speed proportion</text><text x="1453" y="609" class="p">External Temp</text><text x="1453" y="631" class="p">Internal temp</text>
<text x="1611" y="570" class="p e">Flap Angle</text><text x="1611" y="600" class="p e">Exit Temp (heater)</text><text x="1611" y="631" class="p e">Tout</text>
<text x="1533" y="654" class="c n">Heater Control</text>

<path d="M1629 469L1640 455H1681V482H1640z" class="blk"/><text x="1661" y="469" class="c s9">[Tout_AC]</text>
<path d="M1629 631L1640 618H1681V644H1640z" class="blk"/><text x="1661" y="632" class="c s9">[Tout_H]</text>
<rect x="1645" y="529" width="27" height="29" class="blk"/><rect x="1649" y="534" width="19" height="11" rx="3" fill="#fff" stroke="#222"/><text x="1658" y="566" class="c n">Flap Pos</text>
<rect x="1645" y="573" width="27" height="29" class="blk"/><rect x="1649" y="577" width="19" height="12" rx="3" fill="#fff" stroke="#222"/><text x="1658" y="610" class="c n">Req Tout</text>

<rect x="866" y="670" width="35" height="38" fill="#e5d24d" stroke="#6a6440" filter="url(#bs)"/>
<text x="883" y="688" class="c" style="font-size:10px;fill:#111">18</text><path d="M870 695h7v5h4l-7.500 6-7.500-6h4z" fill="#bdb585"/>
<text x="883" y="715" class="c n">External Temperature in Celsius</text>
<rect x="940" y="675" width="89" height="27" class="blk"/><text x="985" y="688" class="c n">Celsius to Kelvin</text>
<circle cx="1148" cy="689" r="9" class="blk"/><text x="1143" y="690" class="c" style="font-size:9px">+</text><text x="1149" y="684" class="c" style="font-size:9px">−</text>
<path d="M1218 675L1245 689 1218 702z" class="blk"/><text x="1226" y="689" class="c s9">-K-</text>
<text x="1231" y="710" class="c n">Mass Flow Rate</text>
<path d="M971 711H1021L1038 724 1021 736H971z" class="blk"/><text x="997" y="724" class="c s9">[Tout_AC]</text>
<path d="M971 751H1021L1038 763 1021 776H971z" class="blk"/><text x="997" y="764" class="c s9">[Tout_H]</text>
<circle cx="1064" cy="763" r="9" class="blk"/><text x="1059" y="764" class="c" style="font-size:9px">+</text><text x="1064" y="759" class="c" style="font-size:9px">+</text><text x="1064" y="768" class="c" style="font-size:9px">−</text>
<rect x="1130" y="720" width="40" height="30" class="blk"/><text x="1149" y="735" class="c s9">x</text>
<path d="M1231 724L1258 737 1231 750z" class="blk"/><text x="1240" y="738" class="c s9">10</text>
<circle cx="1289" cy="737" r="9" class="blk"/><text x="1285" y="737" class="c" style="font-size:9px">+</text><text x="1289" y="733" class="c" style="font-size:9px">+</text><text x="1289" y="741" class="c" style="font-size:9px">+</text>
<text x="1149" y="759" class="c n">Proportion fan speed</text><text x="1244" y="759" class="c n">Fan Speed rate</text>
<rect x="1135" y="767" width="78" height="28" class="blk"/><text x="1173" y="781" class="c n">Heat Sources</text><path d="M1139 782h7v6h4l-7.500 6-7.500-6h4z" fill="#cfcfcf"/>
<text x="1174" y="803" class="c n">Heat from occupants</text><text x="1174" y="818" class="c n" style="fill:#777">No. of occupants: 1</text>
<text x="924" y="813" class="c n">Copyright 1990-2021 The MathWorks, Inc.</text>

<!-- car image (crop units: 3 = 1px) -->
<g transform="translate(1315 675) scale(.33333)">
<g clip-path="url(#car)">
<g filter="url(#soft)">
<rect x="12" y="12" width="276" height="373" fill="#8e8e8e"/>
<path d="M170 12H288V130Q240 40 170 12z" fill="#b4b4a6"/>
<path d="M22 40Q120 28 185 48Q250 75 288 135V270H170V65H25z" fill="#c3c3b2"/>
<path d="M25 42Q110 30 180 48Q215 58 240 80Q200 65 165 64L165 78H25z" fill="#0a0a0a"/>
<path d="M175 65Q220 72 245 92V150L175 150z" fill="#cacab8"/>
<path d="M175 152H280" stroke="#858577" stroke-width="3"/>
<path d="M170 150H288V200H170z" fill="#b5b5a6"/>
<path d="M12 40H28L30 290H12z" fill="#b4b4b4"/>
<path d="M28 78H165V140H28z" fill="#1a1a1a"/>
<path d="M108 90Q140 78 165 92V128H112z" fill="#adadad"/>
<path d="M30 85Q60 70 92 80Q96 110 90 135H34z" fill="#8c8c8c"/>
<path d="M42 82L44 132" stroke="#c86a80" stroke-width="4" fill="none"/>
<path d="M112 128Q150 118 175 130L205 220 160 230 130 190z" fill="#a4a4a4"/>
<path d="M150 150l18-4 2 7-18 4z" fill="#b83a4c"/>
<path d="M165 165L195 160 205 225 178 228z" fill="#1c1c1c"/>
<path d="M170 200H288V262H170z" fill="#b4b4b4"/>
<path d="M195 222H240V235H195z" fill="#2a2a2a"/>
<path d="M272 220H288V262H272z" fill="#262626"/>
<path d="M278 165l10-10V190H276z" fill="#1a1a1a"/>
<path d="M28 148Q60 125 92 133Q120 160 160 268L118 302 74 312Q30 210 28 148z" fill="#a6a6a6"/>
<path d="M30 150Q38 230 76 312" fill="none" stroke="#c4808e" stroke-width="3"/>
<path d="M80 196L124 188 152 268 112 300z" fill="#161616"/>
<path d="M74 172l26-3 2 8-26 3z" fill="#b83244"/>
<path d="M150 198Q175 195 192 208L186 216Q165 214 150 208z" fill="#d8384c"/>
<path d="M160 255L185 262 180 270H165z" fill="#d83c50"/>
<path d="M102 312L150 272 288 262V345L170 352 112 332z" fill="#b8b8b6"/>
<path d="M112 308L150 272 210 275 168 310z" fill="#232323"/>
<path d="M110 322Q150 338 278 318" fill="none" stroke="#c07a8a" stroke-width="3"/>
<path d="M12 295H70L118 330 130 385H12z" fill="#7a7a7a"/>
<path d="M70 312L130 335 135 368 80 340z" fill="#3e3e3e"/>
<path d="M130 352L288 345V385H130z" fill="#5a5a5a"/>
<path d="M250 365l38-18V385H250z" fill="#2a2a2a"/>
</g>
</g>
</g>
<text x="1365" y="812" class="c n">Interior Dynamics</text>

<rect x="1433" y="726" width="120" height="31" class="blk"/><text x="1493" y="740" class="c n">Kelvin to Celsius</text>
<path d="M1557 731q5-4 10 0M1558.500 727q3.500-3 7 0" fill="none" stroke="#c8d0e4"/><circle cx="1562" cy="736" r="1.500" fill="#a8b4d8"/>
<rect x="1579" y="727" width="102" height="29" fill="#e5d24d" stroke="#555" filter="url(#bs)"/><rect x="1581" y="730" width="62" height="14" fill="none" stroke="#5a4a14"/>
<text x="1630" y="764" class="c n">Thermometer Display</text>
</svg>
</body></html>
